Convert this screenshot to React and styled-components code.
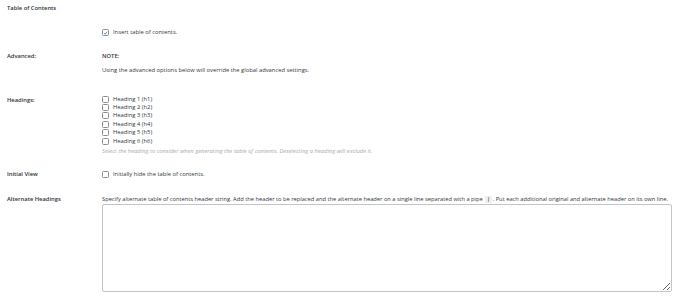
import React from 'react'
import styled, { createGlobalStyle } from 'styled-components'

const Global = createGlobalStyle`
  html, body { margin: 0; padding: 0; background: #fff; }
  body { font-family: "Open Sans", "Noto Sans", sans-serif; color: #32373c; }
`

const Page = styled.div`
  width: 680px;
  height: 300px;
  padding: 4px 8px 0 7px;
  box-sizing: border-box;
  font-size: 5.8px;
  line-height: 9px;
`

const Title = styled.div`
  font-weight: 600;
  color: #2c3338;
  height: 10px;
`

const Row = styled.div`
  display: grid;
  grid-template-columns: 95px 1fr;
  margin-top: ${p => p.$top}px;
`

const Label = styled.div`
  font-weight: 600;
  color: #2c3338;
  padding-top: ${p => p.$pad || 0}px;
`

const Field = styled.div`
  display: flex;
  flex-direction: column;
`

const Check = styled.label`
  display: flex;
  align-items: center;
  gap: 4px;
  height: ${p => p.$h || 9}px;
`

const Box = styled.span`
  width: 7px;
  height: 7px;
  box-sizing: border-box;
  border: 1px solid #8c8f94;
  border-radius: 1.5px;
  background: #fff;
  display: flex;
  align-items: center;
  justify-content: center;
`

const Note = styled.div`
  color: #2c3338;
  font-weight: 600;
  margin-bottom: ${p => p.$mb || 0}px;
`

const Desc = styled.div`
  font-style: italic;
  color: #a7aaad;
  margin-top: 2px;
`

const Help = styled.div`
  white-space: nowrap;
  font-size: 5.75px;
  letter-spacing: -0.01px;
`

const Code = styled.code`
  font-family: "Liberation Mono", monospace;
  background: #f0f0f1;
  padding: 0 1.5px;
  margin: 0 1px;
`

const Area = styled.textarea`
  width: 570px;
  height: 88px;
  box-sizing: border-box;
  border: 1px solid #c3c4c7;
  border-radius: 2px;
  margin-top: 0;
  display: block;
  resize: both;
`

const Tick = () => (
  <svg width="6" height="6" viewBox="0 0 10 10">
    <path d="M2 5.2 L4.2 7.4 L8.2 2.6" fill="none" stroke="#2271b1" strokeWidth="1.6" />
  </svg>
)

const headings = [1, 2, 3, 4, 5, 6]

export default function App() {
  return (
    <Page>
      <Global />
      <Title>Table of Contents</Title>
      <Row $top={14}>
        <Label />
        <Field>
          <Check><Box><Tick /></Box>Insert table of contents.</Check>
        </Field>
      </Row>
      <Row $top={15}>
        <Label>Advanced:</Label>
        <Field>
          <Note $mb={5}>NOTE:</Note>
          <div>Using the advanced options below will override the global advanced settings.</div>
        </Field>
      </Row>
      <Row $top={20}>
        <Label $pad={1}>Headings:</Label>
        <Field>
          {headings.map(h => (
            <Check key={h} $h={8.4}><Box />Heading {h} (h{h})</Check>
          ))}
          <Desc>Select the heading to consider when generating the table of contents. Deselecting a heading will exclude it.</Desc>
        </Field>
      </Row>
      <Row $top={14}>
        <Label>Initial View</Label>
        <Field>
          <Check><Box />Initially hide the table of contents.</Check>
        </Field>
      </Row>
      <Row $top={16}>
        <Label>Alternate Headings</Label>
        <Field>
          <Help>Specify alternate table of contents header string. Add the header to be replaced and the alternate header on a single line separated with a pipe <Code>|</Code>. Put each additional original and alternate header on its own line.</Help>
          <Area />
        </Field>
      </Row>
    </Page>
  )
}
